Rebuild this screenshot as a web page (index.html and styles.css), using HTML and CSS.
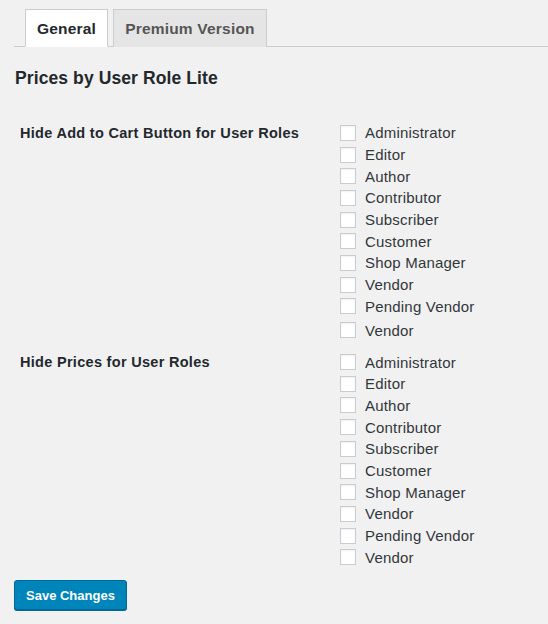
FILE: index.html
```html
<!DOCTYPE html>
<html>
<head>
<meta charset="utf-8">
<link rel="stylesheet" href="styles.css">
</head>
<body>
<div class="wrap">
  <nav class="tabs">
    <span class="tab active">General</span>
    <span class="tab">Premium Version</span>
  </nav>
  <h2 class="title">Prices by User Role Lite</h2>
  <div class="form">
    <div class="row first">
      <div class="label">Hide Add to Cart Button for User Roles</div>
      <div class="opts">
        <label class="opt"><span class="cb"></span>Administrator</label>
        <label class="opt"><span class="cb"></span>Editor</label>
        <label class="opt"><span class="cb"></span>Author</label>
        <label class="opt"><span class="cb"></span>Contributor</label>
        <label class="opt"><span class="cb"></span>Subscriber</label>
        <label class="opt"><span class="cb"></span>Customer</label>
        <label class="opt"><span class="cb"></span>Shop Manager</label>
        <label class="opt"><span class="cb"></span>Vendor</label>
        <label class="opt"><span class="cb"></span>Pending Vendor</label>
        <label class="opt extra"><span class="cb"></span>Vendor</label>
      </div>
    </div>
    <div class="row second">
      <div class="label">Hide Prices for User Roles</div>
      <div class="opts">
        <label class="opt"><span class="cb"></span>Administrator</label>
        <label class="opt"><span class="cb"></span>Editor</label>
        <label class="opt"><span class="cb"></span>Author</label>
        <label class="opt"><span class="cb"></span>Contributor</label>
        <label class="opt"><span class="cb"></span>Subscriber</label>
        <label class="opt"><span class="cb"></span>Customer</label>
        <label class="opt"><span class="cb"></span>Shop Manager</label>
        <label class="opt"><span class="cb"></span>Vendor</label>
        <label class="opt"><span class="cb"></span>Pending Vendor</label>
        <label class="opt"><span class="cb"></span>Vendor</label>
      </div>
    </div>
  </div>
  <button class="btn">Save Changes</button>
</div>
</body>
</html>
```

FILE: styles.css
```css
html, body {
  margin: 0;
  padding: 0;
  background: #f1f1f1;
}
body {
  font-family: "Liberation Sans", Arial, sans-serif;
  color: #23282d;
  width: 548px;
  height: 624px;
  overflow: hidden;
}
.wrap {
  padding: 9px 0 0 14px;
}
.tabs {
  display: flex;
  gap: 5px;
  padding-left: 11px;
  border-bottom: 1px solid #ccc;
  height: 37px;
}
.tab {
  display: block;
  box-sizing: border-box;
  height: 38px;
  padding: 0 11px;
  line-height: 37px;
  font-size: 15.5px;
  letter-spacing: 0.2px;
  font-weight: bold;
  color: #555;
  background: #e5e5e5;
  border: 1px solid #ccc;
  border-bottom: none;
}
.tab.active {
  background: #fff;
  color: #23282d;
  border-bottom: 1px solid #fff;
}
.title {
  margin: 20px 0 0 1px;
  font-size: 17.5px;
  letter-spacing: 0.1px;
  font-weight: bold;
  line-height: 22px;
  color: #23282d;
}
.form {
  margin-top: 33px;
}
.row {
  display: flex;
}
.first {
  margin-top: 1px;
}
.row.second {
  margin-top: 10px;
}
.label {
  width: 320px;
  padding-left: 6px;
  padding-top: 1px;
  font-size: 14.5px;
  letter-spacing: 0.3px;
  font-weight: bold;
  line-height: 20px;
  color: #23282d;
}
.opts {
  display: flex;
  flex-direction: column;
}
.opt {
  display: flex;
  align-items: center;
  height: 21.7px;
  font-size: 15px;
  letter-spacing: 0.2px;
  color: #32373c;
}
.opt.extra {
  margin-top: 2.4px;
}
.cb {
  display: inline-block;
  width: 16px;
  height: 16px;
  box-sizing: border-box;
  border: 1px solid #c8cbcf;
  background: #fff;
  box-shadow: inset 0 1px 2px rgba(0,0,0,0.06);
  margin-right: 9px;
}
.btn {
  display: block;
  margin-top: 12px;
  height: 30px;
  padding: 0 11px;
  font-family: "Liberation Sans", Arial, sans-serif;
  font-size: 13px;
  font-weight: bold;
  color: #fff;
  background: #0085ba;
  border: 1px solid #006799;
  border-radius: 3px;
  box-shadow: 0 1px 0 #006799;
}
```
